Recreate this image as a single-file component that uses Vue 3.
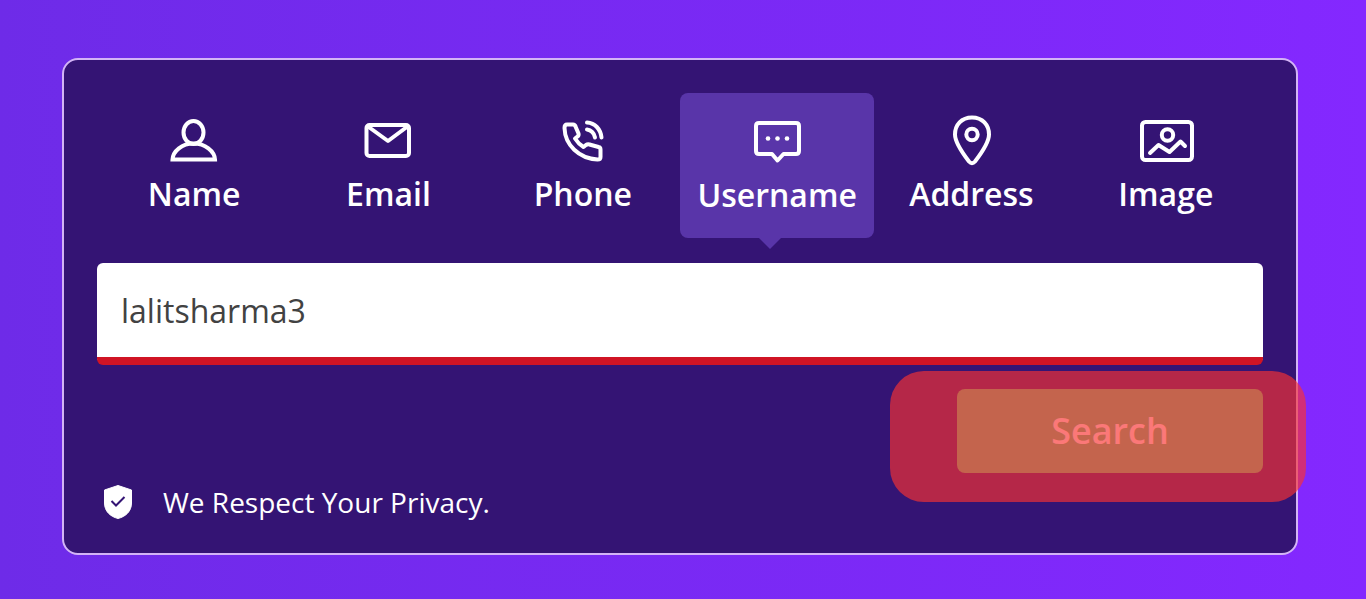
<script setup>
import { ref } from 'vue'

const tabs = ['Name', 'Email', 'Phone', 'Username', 'Address', 'Image']
const active = ref('Username')
const query = ref('lalitsharma3')
</script>

<template>
  <main class="page">
    <form class="card" @submit.prevent>
      <nav class="tabs" aria-label="Search type">
        <button
          v-for="tab in tabs"
          :key="tab"
          type="button"
          class="tab"
          :class="{ active: tab === active }"
          :aria-pressed="tab === active"
          @click="active = tab"
        >
          <svg class="icon" viewBox="0 0 60 52" aria-hidden="true">
            <g v-if="tab === 'Name'">
              <ellipse cx="29.500" cy="17.500" rx="10" ry="11.500" />
              <path d="M8.500 44.500C9 36 18 28.500 29.500 28.500S50.500 36 51 44.500Z" stroke-linejoin="miter" />
            </g>
            <g v-else-if="tab === 'Email'">
              <rect x="8.500" y="10" width="42.500" height="31" rx="3" />
              <path d="M10 11.500L30 26L49.500 11.500" />
            </g>
            <g v-else-if="tab === 'Phone'">
              <path d="M14 9.500H20Q22 9.500 22.500 11.500L25.500 18.500Q26 20.500 24.500 21.500L22 23.500Q25.500 29 30.500 32L33 30Q34.500 29 36.500 29.500L45.500 32Q47.500 32.500 47.500 34.500V42Q47.500 44.500 44.500 44.500C26 43.500 12 30 11.500 13Q11.500 9.500 14 9.500Z" />
              <path d="M34 7.500C42 8 47.500 14 48.500 22.500M34 14.500C38 15 41 18 42 22.500" />
            </g>
            <g v-else-if="tab === 'Username'">
              <path d="M12 8H49Q52 8 52 11V36Q52 39 49 39H36.500L30.500 45.500L25 39H12Q9 39 9 36V11Q9 8 12 8Z" />
              <g class="solid">
                <circle cx="21" cy="23.500" r="2.300" />
                <circle cx="30.500" cy="23.500" r="2.300" />
                <circle cx="40" cy="23.500" r="2.300" />
              </g>
            </g>
            <g v-else-if="tab === 'Address'">
              <path d="M31 2.500C20.500 2.500 14 10 14 19.500C14 27 23 40 28 46.500Q31 50 34 46.500C39 40 48 27 48 19.500C48 10 41.500 2.500 31 2.500Z" />
              <circle cx="31" cy="19.500" r="5.700" />
            </g>
            <g v-else>
              <rect x="6" y="7" width="50" height="38" rx="3.500" />
              <circle cx="31.500" cy="20" r="5.700" />
              <path d="M14 38L22.500 30L33.500 37L44.500 26.500L49 31" />
            </g>
          </svg>
          <span>{{ tab }}</span>
        </button>
      </nav>

      <input v-model="query" class="query" type="text" aria-label="Username" />

      <div class="actions">
        <button class="search" type="submit">Search</button>
        <div class="highlight" aria-hidden="true"></div>
      </div>

      <p class="privacy">
        <svg class="shield" viewBox="0 0 30 36" aria-hidden="true">
          <path d="M15 1.500L28.500 6V19C28.500 27 23 32.500 15 34.500C7 32.500 1.500 27 1.500 19V6Z" fill="#fff" stroke="#fff" stroke-linejoin="round" />
          <path d="M8.500 17L13 21.500L21.500 13" fill="none" stroke="#341474" stroke-width="2" />
        </svg>
        <span>We Respect Your Privacy.</span>
      </p>
    </form>
  </main>
</template>

<style>
body {
  margin: 0;
}
</style>

<style scoped>
.page {
  box-sizing: border-box;
  min-height: 100vh;
  padding: 58px 68px 44px 62px;
  overflow: hidden;
  background: linear-gradient(90deg, #6e2be8, #8428ff);
  font-family: "Open Sans", "Noto Sans", sans-serif;
  color: #fff;
}

.card {
  padding: 33px 33px 31px;
  border: 2px solid #d3b4f6;
  border-radius: 16px;
  background: #341474;
}

.tabs {
  display: grid;
  grid-template-columns: repeat(6, 1fr);
  height: 145px;
}

.tab {
  position: relative;
  display: flex;
  flex-direction: column;
  align-items: center;
  gap: 5px;
  padding: 22px 0 0;
  border: 0;
  border-radius: 8px;
  background: none;
  color: inherit;
  font: 600 32px/44px "Open Sans", "Noto Sans", sans-serif;
  cursor: pointer;
}

.tab.active {
  gap: 6px;
  background: #5935a9;
}

.tab.active::after {
  content: "";
  position: absolute;
  top: 100%;
  left: calc(50% - 18px);
  border: 11px solid transparent;
  border-top-color: #5935a9;
  border-bottom: 0;
}

.icon {
  width: 60px;
  height: 52px;
  fill: none;
  stroke: #fff;
  stroke-width: 4;
  stroke-linejoin: round;
  stroke-linecap: round;
}

.solid {
  fill: #fff;
  stroke: none;
}

.query {
  box-sizing: border-box;
  display: block;
  width: 100%;
  height: 102px;
  margin-top: 25px;
  padding: 0 24px;
  border: 0;
  border-bottom: 8px solid #d01424;
  border-radius: 6px;
  outline: 0;
  background: #fff;
  color: #424242;
  font: 400 32px/44px "Open Sans", "Noto Sans", sans-serif;
}

.actions {
  position: relative;
  display: flex;
  justify-content: flex-end;
  margin-top: 24px;
}

.search {
  width: 306px;
  height: 84px;
  border: 0;
  border-radius: 8px;
  background: #5fc582;
  color: #fff;
  font: 600 36px/48px "Open Sans", "Noto Sans", sans-serif;
}

.highlight {
  position: absolute;
  top: -18px;
  right: -43px;
  width: 416px;
  height: 131px;
  border-radius: 34px;
  background: rgba(249, 50, 50, 0.66);
  pointer-events: none;
}

.privacy {
  display: flex;
  align-items: center;
  gap: 30px;
  margin: 9px 0 0 6px;
  font-size: 28px;
  line-height: 40px;
}

.shield {
  width: 30px;
  height: 36px;
}
</style>
